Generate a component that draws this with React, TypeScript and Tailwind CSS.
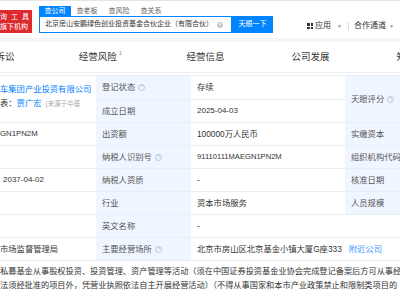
import React from 'react';

const tabs = [
  { name: '法律诉讼' },
  { name: '经营风险', count: '1' },
  { name: '经营信息' },
  { name: '公司发展' },
  { name: '知识产权' },
];

function Help() {
  return (
    <span className="ml-[3px] inline-flex h-[7px] w-[7px] items-center justify-center rounded-full border border-[#b9c6d6] text-[5px] leading-none text-[#b9c6d6]">
      ?
    </span>
  );
}

const base = 'flex items-center border-b border-[#e8eef5] whitespace-nowrap overflow-hidden';
const label = base + ' pl-[6px] bg-[#f0f6ff] text-[#555]';
const value = base + ' pl-[6px] text-[#333]';
const left = base + ' text-[#333]';

export default function App() {
  return (
    <div className="w-[400px] h-[300px] overflow-hidden bg-white font-['Liberation_Sans','Noto_Sans_CJK_SC',sans-serif]">
      {/* header */}
      <div className="flex h-[38px] items-start border-t border-[#e6e6e6] bg-white">
        <div className="mt-[9px] flex h-[23px] w-[32px] shrink-0 flex-col justify-center overflow-hidden bg-[#dc2a2f] text-[7px] leading-[10px] text-white">
          <span className="whitespace-nowrap tracking-[1px]">询 工 具</span>
          <span className="whitespace-nowrap">旗下机构</span>
        </div>
        <div className="ml-[7px] mt-[5px]">
          <div className="flex h-[10px] text-[7px] leading-[10px]">
            <span className="w-[32px] bg-[#0084ff] text-center text-white">查公司</span>
            <span className="w-[32px] text-center text-[#666]">查老板</span>
            <span className="w-[32px] text-center text-[#666]">查风险</span>
            <span className="w-[32px] text-center text-[#666]">查关系</span>
          </div>
          <div className="flex h-[17px]">
            <div className="flex w-[193px] items-center border border-[#0084ff] pl-[5px] pr-[8px] text-[7px] text-[#333]">
              <span className="flex-1 whitespace-nowrap">北京房山安鹏绿色创业投资基金合伙企业（有限合伙）</span>
              <span className="flex h-[6px] w-[6px] items-center justify-center rounded-full bg-[#c8c8c8] text-[5px] leading-none text-white">×</span>
            </div>
            <div className="flex w-[41px] items-center justify-center bg-[#0084ff] text-[7px] text-white">天眼一下</div>
          </div>
        </div>
        <div className="ml-auto mr-[6px] mt-[20px] flex items-center text-[8px] leading-[10px] text-[#333]">
          <span className="grid grid-cols-2 gap-[1px]">
            <span className="h-[2.5px] w-[2.5px] bg-[#333]" />
            <span className="h-[2.5px] w-[2.5px] bg-[#333]" />
            <span className="h-[2.5px] w-[2.5px] bg-[#333]" />
            <span className="h-[2.5px] w-[2.5px] bg-[#333]" />
          </span>
          <span className="ml-[2px]">应用</span>
          <span className="ml-[6px] text-[5px] text-[#999]">▼</span>
          <span className="ml-[6px] h-[8px] w-px bg-[#ddd]" />
          <span className="ml-[5px]">合作通道</span>
          <span className="ml-[3px] text-[5px] text-[#999]">▼</span>
        </div>
      </div>

      <div className="h-[4px] bg-[#f4f5f7]" />

      {/* section tabs */}
      <div className="flex h-[31px] items-center border-b border-[#eeeeee] bg-white">
        <div className="-ml-[57px] mt-[1px] flex">
          {tabs.map((t) => (
            <div key={t.name} className="flex w-[105px] shrink-0 items-start justify-center text-[9.5px] text-[#333]">
              <span>{t.name}</span>
              {t.count && <span className="ml-[2px] -mt-[1px] text-[6px] text-[#999]">{t.count}</span>}
            </div>
          ))}
        </div>
      </div>

      {/* info table */}
      <div className="mt-[2px] grid grid-cols-[96px_95px_154px_55px] grid-rows-[24px_23px_23px_23px_23px_23px_23px_23px_auto] border-t border-[#e8eef5] text-[8.3px]">
        <div className="row-span-2 flex flex-col justify-center border-b border-[#e8eef5] pb-[6px] leading-[14px] whitespace-nowrap overflow-hidden">
          <span className="text-[#0084ff]">车集团产业投资有限公司</span>
          <span className="text-[#333]">
            表：<span className="text-[#0084ff]">贾广宏</span>
            <span className="ml-[4px] text-[6.5px] text-[#aaa]">(来源于中基</span>
          </span>
        </div>
        <div className={label}>登记状态<Help /></div>
        <div className={value + ' text-[#2eaf63]'}>存续</div>
        <div className={label + ' row-span-2'}>天眼评分<Help /></div>

        <div className={label}>成立日期</div>
        <div className={value + ' text-[8px]'}>2025-04-03</div>

        <div className={left + ' text-[7.8px]'}>GN1PN2M</div>
        <div className={label}>出资额</div>
        <div className={value}>100000万人民币</div>
        <div className={label}>实缴资本</div>

        <div className={left} />
        <div className={label}>纳税人识别号<Help /></div>
        <div className={value + ' text-[7.6px]'}>91110111MAEGN1PN2M</div>
        <div className={label}>组织机构代码</div>

        <div className={left + ' pl-[3px] text-[8px]'}>2037-04-02</div>
        <div className={label}>纳税人资质</div>
        <div className={value}>-</div>
        <div className={label}>核准日期</div>

        <div className={left} />
        <div className={label}>行业</div>
        <div className={value}>资本市场服务</div>
        <div className={label}>人员规模</div>

        <div className={left} />
        <div className={label}>英文名称</div>
        <div className={value + ' col-span-2'}>-</div>

        <div className={left}>市场监督管理局</div>
        <div className={label}>主要经营场所<Help /></div>
        <div className={value + ' col-span-2'}>
          北京市房山区北京基金小镇大厦G座333
          <span className="ml-[7px] text-[#3b95ff]">附近公司</span>
        </div>

        <div className="col-span-4 pt-[4px] text-[8.2px] text-[#333] leading-[14px]">
          <div className="whitespace-nowrap overflow-hidden">私募基金从事股权投资、投资管理、资产管理等活动（须在中国证券投资基金业协会完成登记备案后方可从事经</div>
          <div className="whitespace-nowrap overflow-hidden">法须经批准的项目外，凭营业执照依法自主开展经营活动）（不得从事国家和本市产业政策禁止和限制类项目的</div>
        </div>
      </div>
    </div>
  );
}
